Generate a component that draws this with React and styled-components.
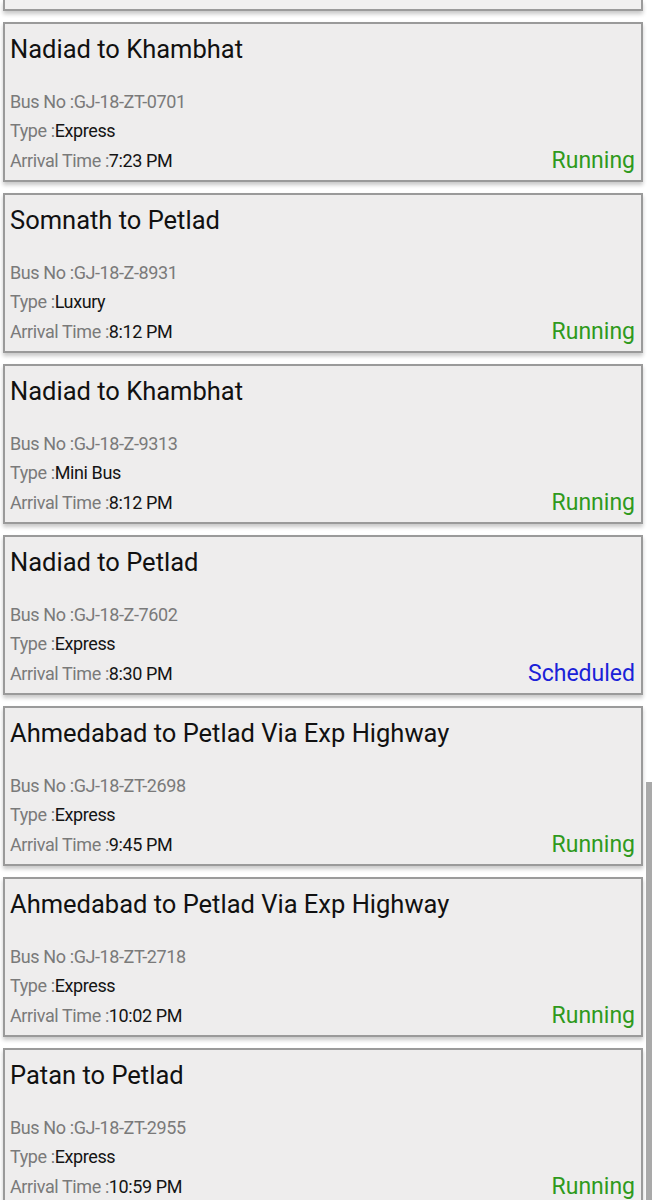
import React from "react";
import styled, { createGlobalStyle } from "styled-components";

const Global = createGlobalStyle`
  html, body { margin: 0; padding: 0; background: #ffffff; }
  body { font-family: Roboto, "Noto Sans", "Liberation Sans", sans-serif; overflow: hidden; }
`;

const Screen = styled.div`
  position: relative;
  width: 652px;
  height: 1200px;
  overflow: hidden;
  background: #ffffff;
`;

const List = styled.div`
  display: flex;
  flex-direction: column;
  gap: 11px;
  padding-left: 3px;
  width: 640px;
`;

const Stub = styled.div`
  height: 9px;
  box-sizing: content-box;
  background: #f1f0f0;
  border: 2px solid #9b9b9b;
  border-top: none;
  box-shadow: 0 3px 4px rgba(0, 0, 0, 0.22);
`;

const Card = styled.div`
  box-sizing: border-box;
  height: 160px;
  flex-shrink: 0;
  background: #eeeded;
  border: 2px solid #9a9a9a;
  box-shadow: 0 3px 4px rgba(0, 0, 0, 0.22);
  padding: 10px 6px 0 5px;
  display: flex;
  flex-direction: column;
`;

const Title = styled.div`
  font-size: 25.5px;
  line-height: 30px;
  color: #111111;
  white-space: nowrap;
`;

const Details = styled.div`
  margin-top: 23px;
  display: flex;
  flex-direction: column;
`;

const Row = styled.div`
  display: flex;
  align-items: baseline;
  justify-content: space-between;
  height: 29px;
  line-height: 29px;
  font-size: 18px;
  letter-spacing: -0.4px;
  white-space: nowrap;
`;

const Label = styled.span`
  color: #7a7a7a;
`;

const Value = styled.span`
  color: #141414;
`;

const Status = styled.span`
  font-size: 23px;
  letter-spacing: 0;
  position: relative;
  top: 1px;
  color: ${(p) => (p.$state === "Scheduled" ? "#1a22d8" : "#2f9a1c")};
`;

const ScrollThumb = styled.div`
  position: absolute;
  right: 0;
  top: 782px;
  width: 6px;
  height: 418px;
  background: #a9a9a9;
`;

const buses = [
  { route: "Nadiad to Khambhat", no: "GJ-18-ZT-0701", type: "Express", time: "7:23 PM", status: "Running" },
  { route: "Somnath to Petlad", no: "GJ-18-Z-8931", type: "Luxury", time: "8:12 PM", status: "Running" },
  { route: "Nadiad to Khambhat", no: "GJ-18-Z-9313", type: "Mini Bus", time: "8:12 PM", status: "Running" },
  { route: "Nadiad to Petlad", no: "GJ-18-Z-7602", type: "Express", time: "8:30 PM", status: "Scheduled" },
  { route: "Ahmedabad to Petlad Via Exp Highway", no: "GJ-18-ZT-2698", type: "Express", time: "9:45 PM", status: "Running" },
  { route: "Ahmedabad to Petlad Via Exp Highway", no: "GJ-18-ZT-2718", type: "Express", time: "10:02 PM", status: "Running" },
  { route: "Patan to Petlad", no: "GJ-18-ZT-2955", type: "Express", time: "10:59 PM", status: "Running" },
];

export default function App() {
  return (
    <Screen>
      <Global />
      <List>
        <Stub />
        {buses.map((b, i) => (
          <Card key={i}>
            <Title>{b.route}</Title>
            <Details>
              <Row>
                <span>
                  <Label>Bus No :</Label>
                  <Label>{b.no}</Label>
                </span>
              </Row>
              <Row>
                <span>
                  <Label>Type :</Label>
                  <Value>{b.type}</Value>
                </span>
              </Row>
              <Row>
                <span>
                  <Label>Arrival Time :</Label>
                  <Value>{b.time}</Value>
                </span>
                <Status $state={b.status}>{b.status}</Status>
              </Row>
            </Details>
          </Card>
        ))}
      </List>
      <ScrollThumb />
    </Screen>
  );
}
